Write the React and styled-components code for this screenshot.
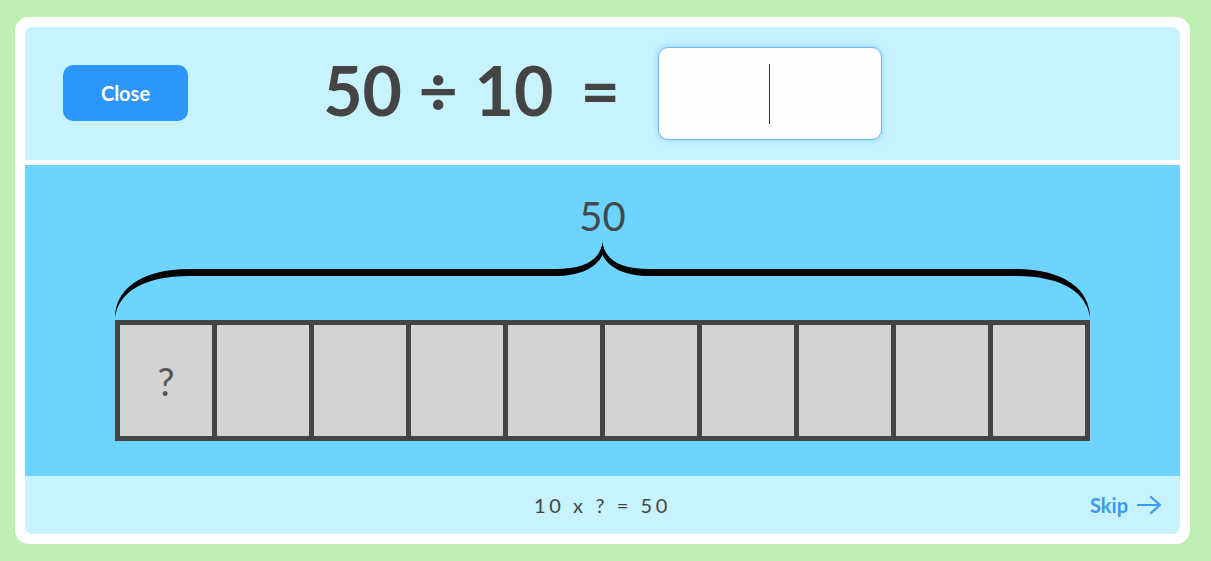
import React from "react";
import styled, { createGlobalStyle } from "styled-components";

const GlobalStyle = createGlobalStyle`
  html, body {
    margin: 0;
    padding: 0;
    background: #bef0b4;
    font-family: Lato, "Open Sans", sans-serif;
  }
`;

const Page = styled.div`
  width: 1211px;
  height: 561px;
  padding: 17px 0 0 15px;
  box-sizing: border-box;
`;

const Card = styled.div`
  width: 1175px;
  height: 527px;
  box-sizing: border-box;
  padding: 10px;
  background: #fff;
  border-radius: 14px;
`;

const Inner = styled.div`
  height: 100%;
  display: flex;
  flex-direction: column;
  border-radius: 8px;
  overflow: hidden;
  background: #c7f3ff;
`;

const Header = styled.div`
  height: 133px;
  flex-shrink: 0;
  display: grid;
  grid-template-columns: 1fr auto 1fr;
  align-items: center;
  border-bottom: 5px solid #fff;
`;

const CloseButton = styled.button`
  justify-self: start;
  margin-left: 38px;
  margin-top: -1px;
  width: 125px;
  height: 56px;
  border: none;
  border-radius: 10px;
  background: #2d96fb;
  color: #fff;
  font-family: Lato, sans-serif;
  font-weight: 700;
  font-size: 20px;
  cursor: pointer;
`;

const Equation = styled.div`
  display: flex;
  align-items: center;
  color: #444;
  font-weight: 700;
  font-size: 68px;
  line-height: 1;
`;

const Term = styled.span`
  margin-bottom: 8px;
`;

const Equals = styled(Term)`
  margin-left: 27px;
  margin-right: 38px;
`;

const AnswerBox = styled.div`
  width: 224px;
  height: 93px;
  box-sizing: border-box;
  display: flex;
  align-items: center;
  justify-content: center;
  background: #fdfdfd;
  border: 1px solid #74b4e8;
  border-radius: 10px;
  box-shadow: 0 0 6px rgba(90, 180, 245, 0.55);
`;

const Caret = styled.span`
  width: 1px;
  height: 60px;
  background: #333;
`;

const Stage = styled.div`
  flex: 1;
  background: #6dd4ff;
  display: flex;
  flex-direction: column;
  align-items: center;
  padding-top: 27px;
`;

const Total = styled.div`
  font-size: 40px;
  line-height: 48px;
  color: #434a4f;
`;

const Brace = styled.svg`
  display: block;
  width: 975px;
  height: 80px;
`;

const Bar = styled.div`
  width: 975px;
  height: 121px;
  box-sizing: border-box;
  display: grid;
  grid-template-columns: repeat(10, 1fr);
  gap: 5px;
  padding: 5px;
  background: #444;
`;

const Cell = styled.div`
  background: #d3d3d3;
  display: flex;
  align-items: center;
  justify-content: center;
  font-size: 38px;
  color: #555;
`;

const Footer = styled.div`
  height: 58px;
  flex-shrink: 0;
  position: relative;
  display: flex;
  align-items: center;
  justify-content: center;
`;

const Hint = styled.div`
  font-size: 20px;
  letter-spacing: 3.6px;
  color: #444;
`;

const SkipLink = styled.a`
  position: absolute;
  right: 18px;
  top: 50%;
  transform: translateY(-50%);
  display: flex;
  align-items: center;
  gap: 8px;
  color: #3a9af5;
  font-weight: 700;
  font-size: 20px;
  text-decoration: none;
  cursor: pointer;
`;

const cells = Array.from({ length: 10 }, (_, i) => i);

export default function App() {
  return (
    <>
      <GlobalStyle />
      <Page>
        <Card>
          <Inner>
            <Header>
              <CloseButton>Close</CloseButton>
              <Equation>
                <Term>50 ÷ 10</Term>
                <Equals>=</Equals>
                <AnswerBox>
                  <Caret />
                </AnswerBox>
              </Equation>
              <div />
            </Header>

            <Stage>
              <Total>50</Total>
              <Brace viewBox="0 0 975 80">
                <path
                  fill="#000"
                  d="M0 78 C0 50 25 29 75 29 L440 29 C470 29 485 20 487.5 2 C490 20 505 29 535 29 L900 29 C950 29 975 50 975 78 C972 53 948 36 900 36 L535 36 C510 36 494 28 487.5 15 C481 28 465 36 440 36 L75 36 C27 36 3 53 0 78 Z"
                />
              </Brace>
              <Bar>
                {cells.map((i) => (
                  <Cell key={i}>{i === 0 ? "?" : ""}</Cell>
                ))}
              </Bar>
            </Stage>

            <Footer>
              <Hint>10 x ? = 50</Hint>
              <SkipLink>
                Skip
                <svg width="26" height="20" viewBox="0 0 26 20" fill="none" stroke="#3a9af5" strokeWidth="2.2" strokeLinecap="round" strokeLinejoin="round">
                  <path d="M2 10 H24 M15 2 L24 10 L15 18" />
                </svg>
              </SkipLink>
            </Footer>
          </Inner>
        </Card>
      </Page>
    </>
  );
}
